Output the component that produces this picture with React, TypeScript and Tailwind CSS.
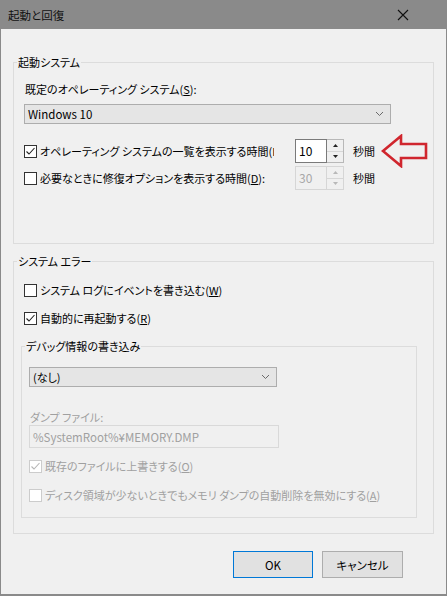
import React from 'react';

const FONT = "font-['Noto_Sans_CJK_JP','Noto_Sans',sans-serif] [font-feature-settings:'palt']";

// Small Windows-style checkbox
const CheckBox = ({ checked, disabled }: { checked?: boolean; disabled?: boolean }) => (
  <span
    className={`flex h-[13px] w-[13px] shrink-0 items-center justify-center border bg-white ${
      disabled ? 'border-[#cccccc]' : 'border-[#333333]'
    }`}
  >
    {checked && (
      <svg width="11" height="11" viewBox="0 0 11 11">
        <polyline
          points="1.5,5.5 4,8 9.5,2"
          fill="none"
          stroke={disabled ? '#b5b5b5' : '#222222'}
          strokeWidth="1.1"
        />
      </svg>
    )}
  </span>
);

const Chevron = () => (
  <svg width="9" height="6" viewBox="0 0 9 6">
    <polyline points="1,1 4.5,4.5 8,1" fill="none" stroke="#6a6a6a" strokeWidth="1" />
  </svg>
);

const Spinner = ({ value, disabled }: { value: string; disabled?: boolean }) => (
  <div className="flex h-[24px] shrink-0">
    <div
      className={`flex w-[32px] items-center border pl-[3px] text-[12px] ${
        disabled ? 'border-[#d6d6d6] bg-[#f0f0f0] text-[#a8a8a8]' : 'border-[#7a7a7a] bg-white text-black'
      }`}
    >
      {value}
    </div>
    <div className={`flex w-[17px] flex-col border border-l-0 ${disabled ? 'border-[#d6d6d6]' : 'border-[#b8b8b8]'}`}>
      <div className="flex flex-1 items-center justify-center border-b border-[#d6d6d6]">
        <svg width="5" height="3" viewBox="0 0 5 3">
          <polygon points="0,3 2.5,0 5,3" fill={disabled ? '#b8b8b8' : '#222'} />
        </svg>
      </div>
      <div className="flex flex-1 items-center justify-center">
        <svg width="5" height="3" viewBox="0 0 5 3">
          <polygon points="0,0 5,0 2.5,3" fill={disabled ? '#b8b8b8' : '#222'} />
        </svg>
      </div>
    </div>
  </div>
);

const Group = ({ title, className, children }: { title: string; className?: string; children: React.ReactNode }) => (
  <div className={`relative border border-[#dcdcdc] ${className ?? ''}`}>
    <span className="absolute left-[3px] top-[-9px] bg-[#f0f0f0] px-[1px] leading-[16px]">{title}</span>
    {children}
  </div>
);

export default function App() {
  return (
    <div className={`h-[596px] w-[447px] bg-[#8a8a8a] text-[11px] leading-[16px] text-black ${FONT}`}>
      {/* title bar */}
      <div className="flex h-[29px] items-center justify-between pl-[8px] pr-[38px]">
        <span className="text-[11.5px] text-[#111]">起動と回復</span>
        <svg width="12" height="12" viewBox="0 0 12 12">
          <path d="M1 1 L11 11 M11 1 L1 11" stroke="#111" strokeWidth="1.1" />
        </svg>
      </div>

      {/* body */}
      <div className="mx-[1px] flex h-[565px] flex-col bg-[#f0f0f0] px-[12px] pt-[33px]">
        <Group title="起動システム" className="pb-[53px] pl-[10px]">
          <div className="mt-[18px] pl-[1px]">
            既定のオペレーティング システム(<span className="underline">S</span>):
          </div>
          <div className="mt-[7px] flex h-[20px] w-[367px] items-center justify-between border border-[#adadad] bg-[#e5e5e5] pl-[3px] pr-[6px] text-[11.5px]">
            <span>Windows 10</span>
            <Chevron />
          </div>

          <div className="mt-[10px] flex items-center">
            <CheckBox checked />
            <span className="ml-[3px] mr-[21px] w-[234px] shrink-0 overflow-hidden whitespace-nowrap">
              オペレーティング システムの一覧を表示する時間(I)
            </span>
            <Spinner value="10" />
            <span className="ml-[9px] shrink-0 whitespace-nowrap">秒間</span>
            <svg className="ml-[6px] shrink-0" width="48" height="34" viewBox="0 0 48 34">
              <polygon
                points="2,17 20,2 20,10 45,10 45,24 20,24 20,32"
                fill="none"
                stroke="#d0262e"
                strokeWidth="2.6"
                strokeLinejoin="miter"
              />
            </svg>
          </div>

          <div className="mt-[-2px] flex items-center">
            <CheckBox />
            <span className="ml-[3px] w-[255px] shrink-0 whitespace-nowrap">
              必要なときに修復オプションを表示する時間(<span className="underline">D</span>):
            </span>
            <Spinner value="30" disabled />
            <span className="ml-[9px] whitespace-nowrap">秒間</span>
          </div>
        </Group>

        <Group title="システム エラー" className="mt-[17px] pb-[15px] pl-[7px] pr-[16px]">
          <div className="mt-[20px] flex items-center pl-[3px]">
            <CheckBox />
            <span className="ml-[3px]">
              システム ログにイベントを書き込む(<span className="underline">W</span>)
            </span>
          </div>
          <div className="mt-[12px] flex items-center pl-[3px]">
            <CheckBox checked />
            <span className="ml-[3px]">
              自動的に再起動する(<span className="underline">R</span>)
            </span>
          </div>

          <Group title="デバッグ情報の書き込み" className="mt-[20px] pb-[14px] pl-[7px]">
            <div className="mt-[20px] flex h-[20px] w-[248px] items-center justify-between border border-[#adadad] bg-[#e5e5e5] pl-[3px] pr-[6px]">
              <span>(なし)</span>
              <Chevron />
            </div>
            <div className="mt-[22px] pl-[1px] text-[#a0a0a0]">ダンプ ファイル:</div>
            <div className="flex h-[23px] w-[250px] items-center border border-[#d9d9d9] pl-[3px] text-[11.5px] text-[#a0a0a0]">
              %SystemRoot%¥MEMORY.DMP
            </div>
            <div className="mt-[10px] flex items-center text-[#a0a0a0]">
              <CheckBox checked disabled />
              <span className="ml-[3px]">
                既存のファイルに上書きする(<span className="underline">O</span>)
              </span>
            </div>
            <div className="mt-[13px] flex items-center text-[#a0a0a0]">
              <CheckBox disabled />
              <span className="ml-[3px] whitespace-nowrap">
                ディスク領域が少ないときでもメモリ ダンプの自動削除を無効にする(<span className="underline">A</span>)
              </span>
            </div>
          </Group>
        </Group>

        {/* buttons */}
        <div className="mt-[17px] flex justify-end gap-[9px] pr-[31px]">
          <button className="h-[27px] w-[80px] border border-[#0078d7] bg-[#e1e1e1] text-[11.5px]">OK</button>
          <button className="h-[27px] w-[81px] border border-[#adadad] bg-[#e1e1e1] text-[11.5px]">キャンセル</button>
        </div>
      </div>
    </div>
  );
}
